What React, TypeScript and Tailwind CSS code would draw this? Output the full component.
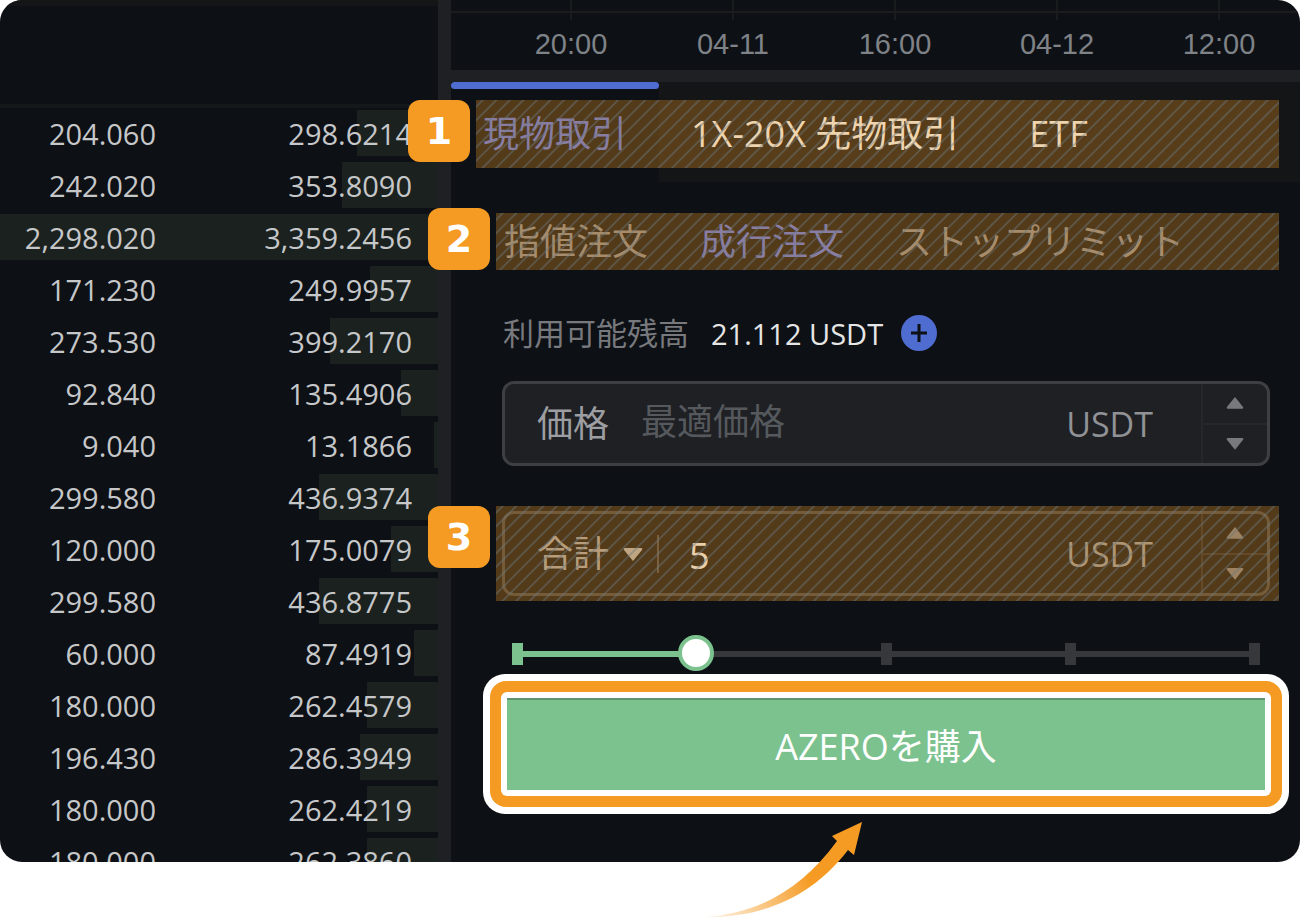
import { useState } from 'react';
import type { ReactNode } from 'react';
import { clsx } from 'clsx';

const orders = [
    { amount: '204.060', total: '298.6214' },
    { amount: '242.020', total: '353.8090' },
    { amount: '2,298.020', total: '3,359.2456' },
    { amount: '171.230', total: '249.9957' },
    { amount: '273.530', total: '399.2170' },
    { amount: '92.840', total: '135.4906' },
    { amount: '9.040', total: '13.1866' },
    { amount: '299.580', total: '436.9374' },
    { amount: '120.000', total: '175.0079' },
    { amount: '299.580', total: '436.8775' },
    { amount: '60.000', total: '87.4919' },
    { amount: '180.000', total: '262.4579' },
    { amount: '196.430', total: '286.3949' },
    { amount: '180.000', total: '262.4219' },
    { amount: '180.000', total: '262.3860' },
];

const times = ['20:00', '04-11', '16:00', '04-12', '12:00'];
const markets = ['現物取引', '1X-20X 先物取引', 'ETF'];
const orderTypes = ['指値注文', '成行注文', 'ストップリミット'];

// total that fills the whole width of a row
const FULL_DEPTH = 1614;

const depthWidth = (total: string) => {
    const value = Number(total.replace(',', ''));
    return `${Math.min(100, (value / FULL_DEPTH) * 100)}%`;
};

const OrderBook = () => (
    <section className="w-[438px] shrink-0 overflow-hidden rounded-l-[22px] [contain:size]">
        <div className="h-[108px] border-t-6 border-b-4 border-t-[#141517] border-b-[#14181a]" />
        <table className="w-full table-fixed border-collapse text-right text-[29px] leading-[52px] text-[#c6c7c8]" aria-label="板情報">
            <tbody>
                {orders.map((order, index) => (
                    <tr key={index} className="relative h-[52px]">
                        <td className="w-[156px] p-0">
                            <span
                                className="absolute right-0 top-[2px] h-[46px] bg-[#1a211f]"
                                style={{ width: depthWidth(order.total) }}
                            />
                            <span className="relative">{order.amount}</span>
                        </td>
                        <td className="py-0 pl-0 pr-[26px]">
                            <span className="relative">{order.total}</span>
                        </td>
                    </tr>
                ))}
            </tbody>
        </table>
    </section>
);

const TimeAxis = () => (
    <div className="relative h-[82px] overflow-hidden rounded-tr-[22px] border-b-12 border-[#1f2024] pl-[39px]">
        <div className="absolute inset-x-0 top-[11px] h-[2px] bg-[#1a1c1e]" />
        <div className="grid grid-cols-5">
            {times.map((time) => (
                <div key={time} className="flex flex-col items-center">
                    <div className="h-5 w-[2px] bg-[#181c1d]" />
                    <span className="font-['Liberation_Sans',sans-serif] text-[29px] leading-[48px] text-[#7f8287]">{time}</span>
                </div>
            ))}
        </div>
    </div>
);

const Highlight = ({ id, className }: { id: string; className: string }) => (
    <div className={clsx('pointer-events-none absolute bg-[#f59b23]/30', className)} aria-hidden="true">
        <svg className="block size-full">
            <defs>
                <pattern id={id} width="9.57" height="9.57" patternUnits="userSpaceOnUse" patternTransform="rotate(45)">
                    <rect x="4" width="1.7" height="9.57" fill="#6a7880" fillOpacity="0.5" />
                </pattern>
            </defs>
            <rect width="100%" height="100%" fill={`url(#${id})`} />
        </svg>
    </div>
);

const Badge = ({ children, className }: { children: ReactNode; className: string }) => (
    <span
        className={clsx(
            "absolute flex size-[62px] items-center justify-center rounded-xl bg-[#f59b23] font-['DejaVu_Sans',sans-serif] text-[38px] font-bold leading-none text-white",
            className
        )}
    >
        {children}
    </span>
);

const Triangle = ({ up = false, className }: { up?: boolean; className: string }) => (
    <svg viewBox="0 0 20 13" className={className} fill="currentColor" aria-hidden="true">
        {up ? <path d="M10 0 19 11Q20 13 18 13H2Q0 13 1 11Z" /> : <path d="M10 13 19 2Q20 0 18 0H2Q0 0 1 2Z" />}
    </svg>
);

const Stepper = ({ label }: { label: string }) => (
    <div className="flex w-[66px] flex-col self-stretch border-l-2 border-[#26272a] text-[#77797d]">
        <button type="button" aria-label={`${label}を増やす`} className="flex flex-1 items-center justify-center border-b-2 border-[#26272a]">
            <Triangle up className="w-[18px]" />
        </button>
        <button type="button" aria-label={`${label}を減らす`} className="flex flex-1 items-center justify-center">
            <Triangle className="w-[18px]" />
        </button>
    </div>
);

const App = () => {
    const [market, setMarket] = useState('現物取引');
    const [orderType, setOrderType] = useState('成行注文');
    const [price, setPrice] = useState('');
    const [total, setTotal] = useState('5');
    const [percent, setPercent] = useState(24);

    return (
        <div className="min-h-screen bg-white font-['Open_Sans','Noto_Sans_CJK_JP',sans-serif]">
            <main className="flex rounded-[22px] bg-[#0d1015]">
                <OrderBook />

                <section className="relative min-w-0 flex-1">
                    <div className="absolute inset-y-0 left-0 w-[13px] bg-[#1f2024]" />
                    <div className="relative ml-[13px]">
                        <TimeAxis />

                        {/* Markets */}
                        <div className="relative flex h-[100px] bg-[#141516]" role="tablist">
                            {markets.map((item) => (
                                <button
                                    key={item}
                                    type="button"
                                    role="tab"
                                    aria-selected={market === item}
                                    onClick={() => setMarket(item)}
                                    className={clsx(
                                        'relative whitespace-nowrap pl-8 pt-1 text-4xl leading-none',
                                        market === item ? 'bg-[#0d1015] pr-8 text-[#5a70d8]' : 'pr-[38px] text-[#ececec]'
                                    )}
                                >
                                    {market === item && <span className="absolute inset-x-0 top-0 h-[7px] rounded-full bg-[#4f6dd0]" />}
                                    {item}
                                </button>
                            ))}
                            <Highlight id="stripes-market" className="bottom-[14px] left-[25px] right-[21px] top-[18px]" />
                            <Badge className="-left-[43px] top-[18px]">1</Badge>
                        </div>

                        <form className="pb-12 pl-[45px] pr-[21px] pt-[31px]" onSubmit={(e) => e.preventDefault()}>
                            {/* Order type */}
                            <div className="relative flex h-[57px] items-center gap-[52px] pl-2">
                                {orderTypes.map((item) => (
                                    <button
                                        key={item}
                                        type="button"
                                        aria-pressed={orderType === item}
                                        onClick={() => setOrderType(item)}
                                        className={clsx(
                                            'whitespace-nowrap text-4xl leading-none',
                                            orderType === item ? 'text-[#5a70d8]' : 'text-[#85868a]'
                                        )}
                                    >
                                        {item}
                                    </button>
                                ))}
                                <Highlight id="stripes-type" className="inset-0" />
                                <Badge className="-left-[68px] -top-[5px]">2</Badge>
                            </div>

                            {/* Balance */}
                            <div className="mt-[39px] flex h-12 items-center whitespace-nowrap pl-[7px]">
                                <span className="text-[31px] leading-none text-[#77797d]">利用可能残高</span>
                                <span className="ml-[22px] text-[29px] font-medium leading-none text-[#e6e6e6]">21.112 USDT</span>
                                <button type="button" aria-label="入金" className="ml-[18px]">
                                    <svg viewBox="0 0 36 36" className="size-9" aria-hidden="true">
                                        <circle cx="18" cy="18" r="18" fill="#4f6dd0" />
                                        <path d="M18 9v18M10 18h16" stroke="#0d1015" strokeWidth="3" />
                                    </svg>
                                </button>
                            </div>

                            <div className="ml-[6px] mr-[9px] mt-6 flex h-[85px] items-center rounded-xl border-3 border-[#3d3f42] bg-[#1f2024]">
                                <label htmlFor="price" className="shrink-0 pl-8 text-4xl leading-none text-[#9c9ea1]">価格</label>
                                <input
                                    id="price"
                                    type="text"
                                    placeholder="最適価格"
                                    value={price}
                                    onChange={(e) => setPrice(e.target.value)}
                                    className="ml-8 h-full min-w-0 flex-1 bg-transparent pb-1 text-4xl text-[#e6e6e6] outline-none placeholder:text-[#55595d]"
                                />
                                <span className="pr-12 text-[34px] leading-none text-[#909296]">USDT</span>
                                <Stepper label="価格" />
                            </div>

                            {/* Total */}
                            <div className="relative mt-10 py-[5px] pl-[6px] pr-[9px]">
                                <div className="flex h-[85px] items-center rounded-xl border-3 border-[#3d3f42]">
                                    <div className="relative ml-8 shrink-0">
                                        <select
                                            aria-label="注文単位"
                                            className="w-[106px] appearance-none bg-transparent text-4xl leading-[48px] text-[#9c9ea1] outline-none"
                                        >
                                            <option>合計</option>
                                        </select>
                                        <Triangle className="pointer-events-none absolute right-0 top-[18px] w-5 text-[#a9abad]" />
                                    </div>
                                    <span className="ml-[14px] h-[38px] w-[2px] bg-[#45474a]" />
                                    <input
                                        aria-label="合計"
                                        type="text"
                                        value={total}
                                        onChange={(e) => setTotal(e.target.value)}
                                        className="ml-[30px] h-full min-w-0 flex-1 bg-transparent pt-1 text-4xl text-[#e6e6e6] outline-none"
                                    />
                                    <span className="pr-12 text-[34px] leading-none text-[#909296]">USDT</span>
                                    <Stepper label="合計" />
                                </div>
                                <Highlight id="stripes-total" className="inset-0" />
                                <Badge className="-left-[68px] top-0">3</Badge>
                            </div>

                            {/* Amount slider */}
                            <div className="relative ml-[6px] mr-[9px] mt-[33px] h-[38px]">
                                <div className="absolute inset-x-[10px] top-[9px] flex h-[22px] items-center justify-between">
                                    <span className="absolute inset-x-0 h-[6px] bg-[#37383b]" />
                                    <span className="absolute left-0 h-[6px] bg-[#7cc28f]" style={{ width: `${percent}%` }} />
                                    {[0, 25, 50, 75, 100].map((mark) => (
                                        <span
                                            key={mark}
                                            className={clsx(
                                                'relative h-full w-[11px]',
                                                mark === 25 && 'invisible',
                                                mark <= percent ? 'bg-[#7cc28f]' : 'bg-[#37383b]'
                                            )}
                                        />
                                    ))}
                                </div>
                                <input
                                    type="range"
                                    aria-label="注文割合"
                                    min={0}
                                    max={100}
                                    value={percent}
                                    onChange={(e) => setPercent(Number(e.target.value))}
                                    className="absolute inset-0 size-full appearance-none bg-transparent outline-none [&::-webkit-slider-thumb]:size-9 [&::-webkit-slider-thumb]:appearance-none [&::-webkit-slider-thumb]:rounded-full [&::-webkit-slider-thumb]:border-4 [&::-webkit-slider-thumb]:border-[#7cc28f] [&::-webkit-slider-thumb]:bg-white"
                                />
                            </div>

                            <div className="relative -ml-[13px] -mr-[10px] mt-[2px] rounded-[22px] bg-white p-[7px]">
                                <div className="rounded-2xl bg-[#f59b23] p-[11px]">
                                    <div className="rounded-md bg-white p-[6px]">
                                        <button
                                            type="submit"
                                            className="block h-[92px] w-full border-t-2 border-[#5f946e] bg-[#7cc28f] pt-1 text-4xl leading-none text-white"
                                        >
                                            AZEROを購入
                                        </button>
                                    </div>
                                </div>
                                <svg
                                    viewBox="0 0 160 98"
                                    className="absolute right-1/2 top-full mr-[22px] mt-[6px] h-[98px] w-[160px]"
                                    aria-hidden="true"
                                >
                                    <defs>
                                        <linearGradient id="arrow-fade" gradientUnits="userSpaceOnUse" x1="-8" y1="97" x2="104" y2="54">
                                            <stop offset="0" stopColor="#f59b23" stopOpacity="0" />
                                            <stop offset="1" stopColor="#f59b23" />
                                        </linearGradient>
                                    </defs>
                                    <path
                                        d="M158 2 150 35 144 30C112 72 65 98 0 97 54 94 98 69 133 21L128 16Z"
                                        fill="url(#arrow-fade)"
                                    />
                                </svg>
                            </div>
                        </form>
                    </div>
                </section>
            </main>
        </div>
    );
};

export default App;
